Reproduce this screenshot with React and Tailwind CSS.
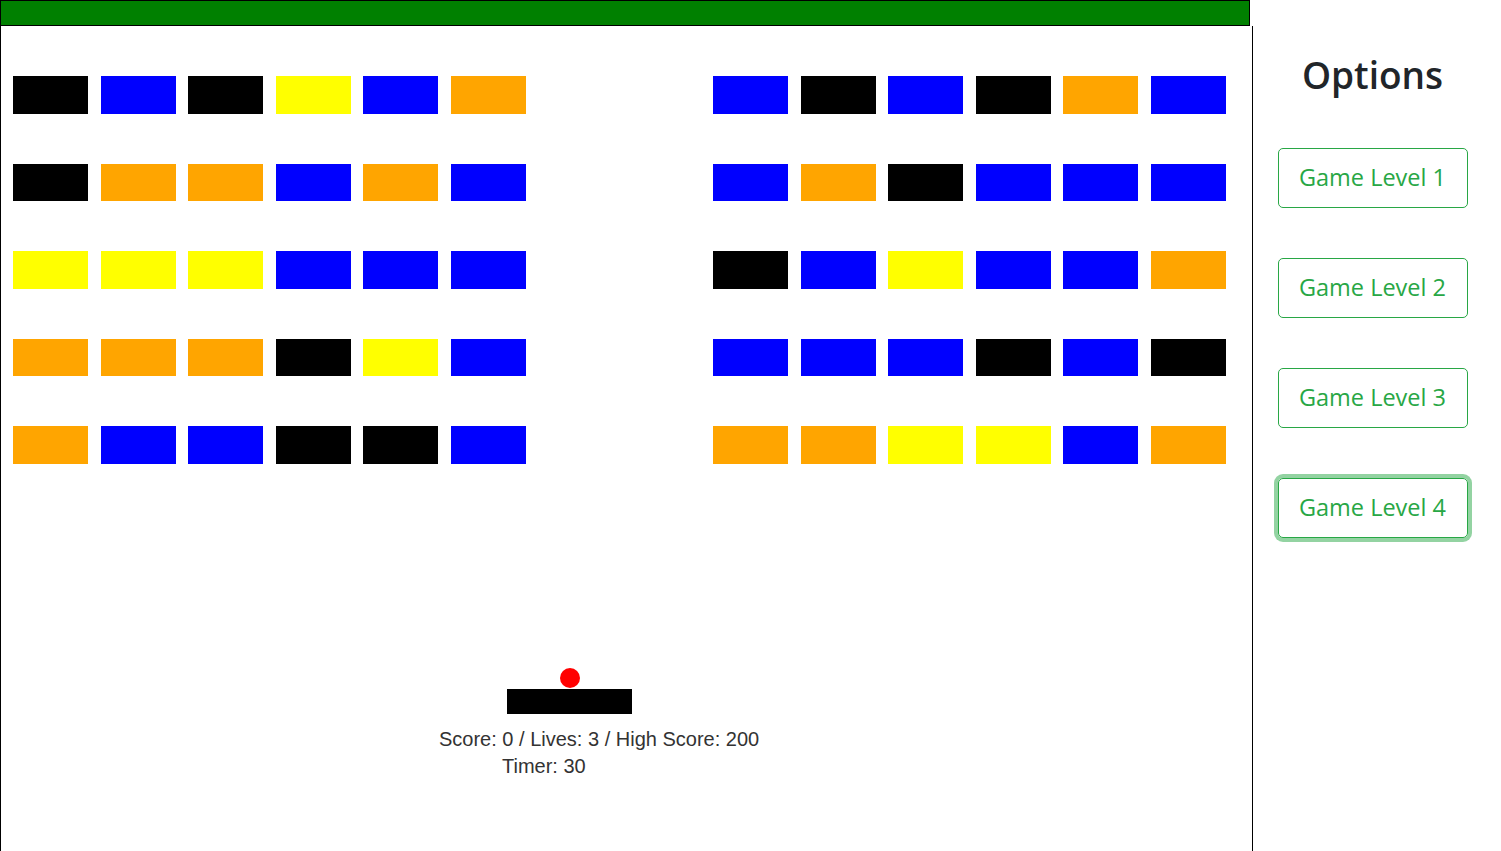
import React from 'react';

// colores de ladrillos
const K = 'bg-[#000000]';
const B = 'bg-[#0000ff]';
const Y = 'bg-[#ffff00]';
const O = 'bg-[#ffa500]';

const leftBricks = [
  [K, B, K, Y, B, O],
  [K, O, O, B, O, B],
  [Y, Y, Y, B, B, B],
  [O, O, O, K, Y, B],
  [O, B, B, K, K, B],
];

const rightBricks = [
  [B, K, B, K, O, B],
  [B, O, K, B, B, B],
  [K, B, Y, B, B, O],
  [B, B, B, K, B, K],
  [O, O, Y, Y, B, O],
];

const BrickGroup = ({ rows }) => (
  <div className="grid grid-cols-[repeat(6,75px)] gap-x-[12.5px] gap-y-[50px]">
    {rows.flat().map((c, i) => (
      <div key={i} className={`h-[37.5px] w-[75px] ${c}`} />
    ))}
  </div>
);

const levels = [1, 2, 3, 4];

const App = () => {
  return (
    <div className="flex h-[851px] overflow-hidden bg-white">
      {/* Zona de juego */}
      <div className="w-[1253px] shrink-0">
        <div className="h-[26px] w-[1250px] border border-black bg-[#008000]" />
        <div className="h-[900px] border-x border-black pl-[12px] pt-[50px]">
          <div className="flex gap-[187.5px]">
            <BrickGroup rows={leftBricks} />
            <BrickGroup rows={rightBricks} />
          </div>
          <div className="ml-[547px] mt-[204.5px] h-[20px] w-[20px] rounded-full bg-[#ff0000]" />
          <div className="ml-[494px] mt-px h-[25px] w-[125px] bg-black" />
          <div className="ml-[426px] mt-[12px] font-['Liberation_Sans',Arial,sans-serif] text-[20px] leading-[27px] text-[#333]">
            <div>Score: 0 / Lives: 3 / High Score: 200</div>
            <div className="ml-[63px]">Timer: 30</div>
          </div>
        </div>
      </div>

      {/* Panel de opciones */}
      <div className="flex w-[239px] flex-col items-center pt-[49px] font-['Open_Sans','Noto_Sans',sans-serif]">
        <h1 className="mb-[47px] text-[37px] font-semibold leading-[52px] text-[#212529]">Options</h1>
        <div className="flex flex-col gap-[50px]">
          {levels.map((n) => (
            <button
              key={n}
              className={`h-[60px] w-[190px] rounded-[5px] border border-[#28a745] text-[23.5px] text-[#28a745] ${
                n === 4 ? 'shadow-[0_0_0_4px_rgba(40,167,69,0.5)]' : ''
              }`}
            >
              Game Level {n}
            </button>
          ))}
        </div>
      </div>
    </div>
  );
};

export default App;
